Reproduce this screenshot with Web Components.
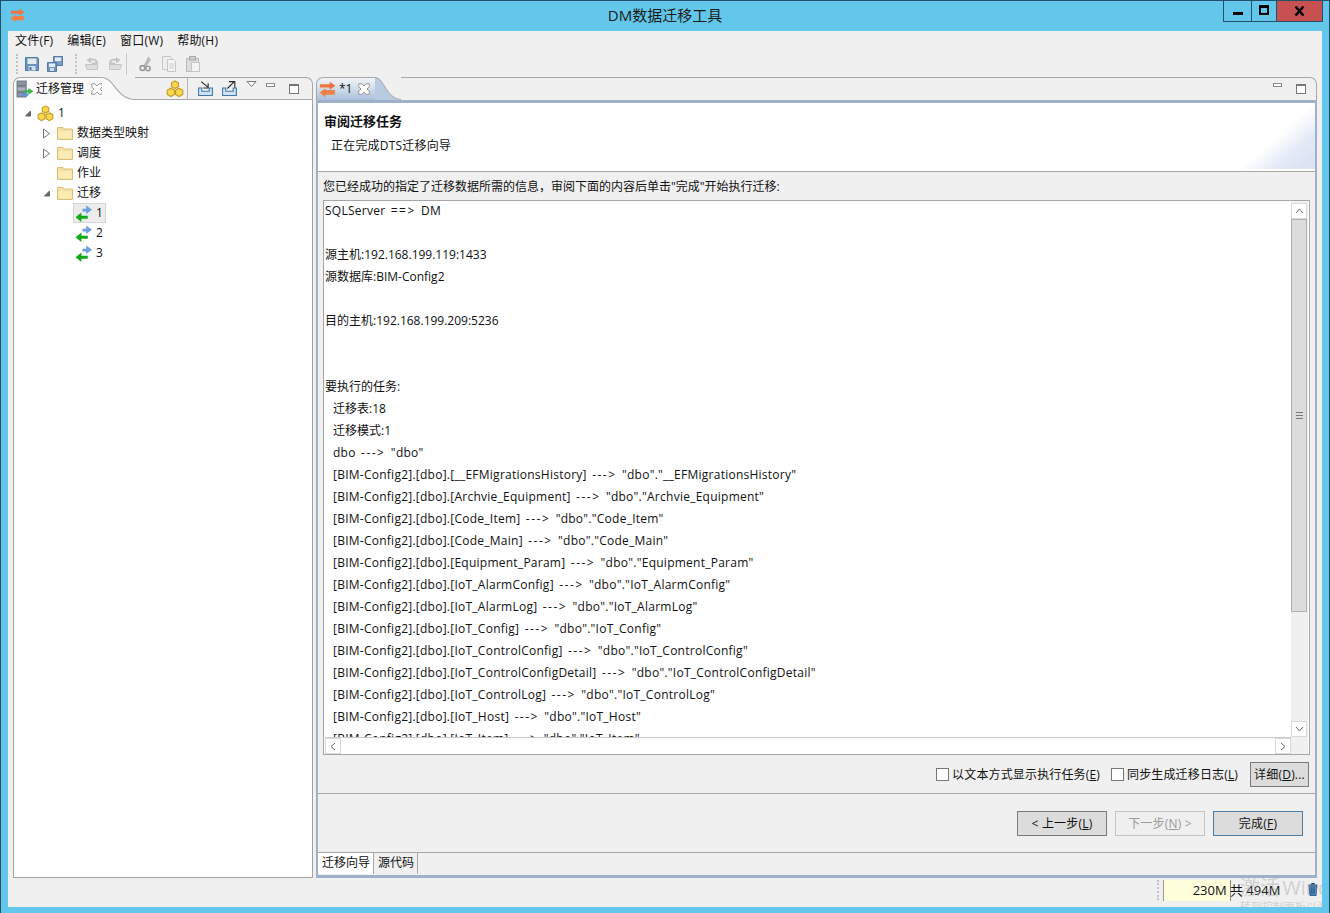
<!DOCTYPE html>
<html lang="zh">
<head>
<meta charset="utf-8">
<title>DM数据迁移工具</title>
<style>
  html, body { margin: 0; padding: 0; height: 100%; overflow: hidden; }
  body { font: 12px/1.2 "Open Sans", "Noto Sans CJK SC", sans-serif; color: #111; }
</style>
</head>
<body>
<dm-window>
  <dm-titlebar slot="title">DM数据迁移工具</dm-titlebar>
  <dm-menubar slot="menu">
    <span>文件(F)</span><span>编辑(E)</span><span>窗口(W)</span><span>帮助(H)</span>
  </dm-menubar>
  <dm-toolbar slot="tools"></dm-toolbar>

  <dm-view slot="left" label="迁移管理" icon="manage" style="width:300px" actions>
    <dm-tree>
      <dm-tree-item level="0" twist="open" icon="nodes">1</dm-tree-item>
      <dm-tree-item level="1" twist="closed" icon="folder">数据类型映射</dm-tree-item>
      <dm-tree-item level="1" twist="closed" icon="folder">调度</dm-tree-item>
      <dm-tree-item level="1" icon="folder">作业</dm-tree-item>
      <dm-tree-item level="1" twist="open" icon="folder">迁移</dm-tree-item>
      <dm-tree-item level="2" icon="swap" selected>1</dm-tree-item>
      <dm-tree-item level="2" icon="swap">2</dm-tree-item>
      <dm-tree-item level="2" icon="swap">3</dm-tree-item>
    </dm-tree>
  </dm-view>

  <dm-view slot="right" label="*1" icon="logo" active style="flex:1">
    <dm-wizard>
      <span slot="title">审阅迁移任务</span>
      <span slot="sub">正在完成DTS迁移向导</span>
      <span slot="intro">您已经成功的指定了迁移数据所需的信息，审阅下面的内容后单击"完成"开始执行迁移:</span>
      <dm-log slot="log"></dm-log>
      <dm-check slot="opts">以文本方式显示执行任务(<u>E</u>)</dm-check>
      <dm-check slot="opts">同步生成迁移日志(<u>L</u>)</dm-check>
      <dm-button slot="opts" style="width:59px;margin-left:1px">详细(<u>D</u>)...</dm-button>
      <dm-button slot="nav">&lt; 上一步(<u>L</u>)</dm-button>
      <dm-button slot="nav" disabled>下一步(<u>N</u>) &gt;</dm-button>
      <dm-button slot="nav" primary>完成(<u>F</u>)</dm-button>
      <span slot="tab" class="on">迁移向导</span>
      <span slot="tab">源代码</span>
    </dm-wizard>
  </dm-view>

  <dm-statusbar slot="status"></dm-statusbar>
</dm-window>

<script>
// small drawn icons, all on a 16x16 box
const ICONS = {
  logo: `<path d="M1 3h9V.8L15.500 4.500 10 8.200V6H1z" fill="#ef7440"/><path d="M15 8.500H6V6.800L.5 11 6 15.200V13h9z" fill="#f0814d"/>`,
  save: `<path d="M1.500 1.500h12l1 1v12h-13z" fill="#6c93bb" stroke="#4f7ba6"/><rect x="3.500" y="2.500" width="9" height="5.500" fill="#e4ebf3"/><rect x="4.500" y="10" width="7" height="4.500" fill="#d5dfe9"/><rect x="5.500" y="11" width="2" height="3" fill="#4f7ba6"/>`,
  saveall: `<path d="M6.500 .5h9v9h-9z" fill="#7ba0c4" stroke="#4f7ba6"/><rect x="8" y="1.500" width="6" height="3.500" fill="#e4ebf3"/><path d="M.5 6.500h9v9h-9z" fill="#6c93bb" stroke="#4f7ba6"/><rect x="2" y="7.500" width="6" height="3.500" fill="#e4ebf3"/><rect x="3" y="12" width="4" height="3" fill="#d5dfe9"/>`,
  undo: `<path d="M1.500 8.500h12v5H3z" fill="#dedede" stroke="#c4c4c4"/><path d="M6 4C10 2.500 13 4 13 7.500H8" fill="none" stroke="#c4c4c4" stroke-width="2"/><path d="M7 1 2.500 4.200 7 7.500z" fill="#c4c4c4"/>`,
  redo: `<path d="M14.500 8.500h-12v5H13z" fill="#dedede" stroke="#c4c4c4"/><path d="M10 4C6 2.500 3 4 3 7.500h5" fill="none" stroke="#c4c4c4" stroke-width="2"/><path d="M9 1l4.500 3.200L9 7.500z" fill="#c4c4c4"/>`,
  cut: `<path d="M11 1 6.500 10M12.500 3 7.500 10" stroke="#b8b8b8" stroke-width="1.800"/><circle cx="4.500" cy="12" r="2.400" fill="none" stroke="#9a9a9a" stroke-width="1.600"/><circle cx="10" cy="12.500" r="2.200" fill="none" stroke="#9a9a9a" stroke-width="1.600"/>`,
  copy: `<path d="M1.500 .5h8l2 2v11h-10z" fill="#eee" stroke="#c6c6c6"/><path d="M6.500 3.500h6l2 2v10h-8z" fill="#f4f4f4" stroke="#c6c6c6"/><path d="M8 8h5M8 10h5M8 12h5" stroke="#cfcfcf"/>`,
  paste: `<rect x="1.500" y="2.500" width="12" height="13" fill="#ddd" stroke="#bbb"/><rect x="4.500" y=".5" width="6" height="3.500" fill="#ccc" stroke="#aaa"/><rect x="6.500" y="6.500" width="8" height="9" fill="#f4f4f4" stroke="#c6c6c6"/>`,
  nodes: `<g stroke="#c99a1e" fill="#f8d84e"><path d="M8 .8l3 1.700v3.400L8 7.600 5 5.900V2.500z"/><path d="M4.300 7.300l3.200 1.800v3.700l-3.200 1.900-3.200-1.900V9.100z"/><path d="M11.700 7.300l3.200 1.800v3.700l-3.200 1.900-3.200-1.900V9.100z"/></g>`,
  folder: `<path d="M.5 2.500h5.500l1 1.500h8.500v10.500H.5z" fill="#f5e0a0" stroke="#d8c07c"/><path d="M1.500 6h13v7.500h-13z" fill="#fbecb4"/>`,
  swap: `<path d="M7 3.500h3.500V.5L16 4.500 10.500 8.500V6H7z" fill="#6f9fdc"/><path d="M12 10H6V7L.5 11.500 6 16V13h6z" fill="#12a816"/>`,
  manage: `<rect x="1" y="1" width="8" height="4" fill="#8d96a0" stroke="#6d7680"/><rect x="1" y="6" width="8" height="4" fill="#aab2bb" stroke="#6d7680"/><rect x="1" y="11" width="8" height="4" fill="#8d96a0" stroke="#6d7680"/><path d="M7 9h4V7l4.500 3L11 13v-2H7z" fill="#3db548"/><path d="M11 12H7.500v-1.500L4 13l3.500 2.500V14H11z" fill="#5b95d6"/>`,
  import: `<path d="M1.500 7.500h3v3h7v-3h3v7h-13z" fill="#cfe1f2" stroke="#3d78ad"/><path d="M4 1.500l6 5M10.500 3v4.500H6" fill="none" stroke="#222"/>`,
  export: `<path d="M1.500 7.500h3v3h7v-3h3v7h-13z" fill="#cfe1f2" stroke="#3d78ad"/><path d="M6 8l6-6M7.500 1.500H13V7" fill="none" stroke="#222"/>`,
  close: `<path d="M2 2h3.500L8 4.500 10.500 2H14v3.500L11.500 8 14 10.500V14h-3.500L8 11.500 5.500 14H2v-3.500L4.500 8 2 5.500z" fill="#fff" stroke="#8b8b8b"/>`,
  trash: `<path d="M3 3.500h10M6 2h4" stroke="#1d4f7a" stroke-width="1.500"/><path d="M3.500 4.500h9l-1 11h-7z" fill="#4f94c8" stroke="#1d4f7a"/><path d="M6 6v8M8 6v8M10 6v8" stroke="#1d4f7a"/>`
};

const FONT = `"Open Sans", "Noto Sans CJK SC", sans-serif`;

class DmIcon extends HTMLElement {
  connectedCallback() {
    const size = this.getAttribute('size') || 16;
    const root = this.shadowRoot || this.attachShadow({ mode: 'open' });
    root.innerHTML = `
      <style>:host { display: inline-block; width: ${size}px; height: ${size}px; flex: none; line-height: 0; }</style>
      <svg width="${size}" height="${size}" viewBox="0 0 16 16">${ICONS[this.getAttribute('name')] || ''}</svg>`;
  }
}

class DmWindow extends HTMLElement {
  constructor() {
    super();
    this.attachShadow({ mode: 'open' }).innerHTML = `
      <style>
        :host { display: flex; flex-direction: column; box-sizing: border-box; width: 1330px; height: 913px;
                background: #62c7ea; border: 1px solid #24506b; border-bottom: 0; overflow: hidden; font: 12px/1.2 ${FONT}; color: #111; }
        .client { flex: 1; display: flex; flex-direction: column; margin: 0 7px 6px 7px; background: #f0f0f0; min-height: 0; }
        .panes { flex: 1; display: flex; gap: 3px; padding: 0 5px 0 5px; min-height: 0; }
      </style>
      <slot name="title"></slot>
      <div class="client">
        <slot name="menu"></slot>
        <slot name="tools"></slot>
        <div class="panes"><slot name="left"></slot><slot name="right"></slot></div>
        <slot name="status"></slot>
      </div>`;
  }
}

class DmTitlebar extends HTMLElement {
  constructor() {
    super();
    this.attachShadow({ mode: 'open' }).innerHTML = `
      <style>
        :host { display: grid; grid-template-columns: 1fr auto 1fr; height: 30px; align-items: start; }
        .logo { padding: 7px 0 0 9px; }
        .title { font-size: 15px; line-height: 29px; color: #1a1a1a; }
        .btns { justify-self: end; display: flex; height: 21px; margin-right: 6px; box-sizing: border-box; border: 1px solid #24506b; border-top: 0; }
        .btns span { display: flex; align-items: center; justify-content: center; box-sizing: border-box; }
        .min { width: 28px; border-right: 1px solid #24506b; }
        .max { width: 25px; border-right: 1px solid #24506b; }
        .cls { width: 45px; background: #c75050; color: #000; }
        .min i { display: block; width: 10px; height: 3px; background: #000; margin-top: 5px; }
        .max i { display: block; width: 6px; height: 5px; border: 2px solid #000; border-top-width: 3px; margin-top: -2px; }
      </style>
      <div class="logo"><dm-icon name="logo" size="15"></dm-icon></div>
      <div class="title"><slot></slot></div>
      <div class="btns">
        <span class="min"><i></i></span><span class="max"><i></i></span>
        <span class="cls"><svg width="11" height="10" viewBox="0 0 11 10"><path d="M1.500 .5 9.500 9.500M9.500 .5 1.500 9.500" stroke="#000" stroke-width="2.400"/></svg></span>
      </div>`;
  }
}

class DmMenubar extends HTMLElement {
  constructor() {
    super();
    this.attachShadow({ mode: 'open' }).innerHTML = `
      <style>
        :host { display: flex; gap: 14px; height: 19px; align-items: center; padding: 2px 0 0 7px; box-sizing: border-box; }
        ::slotted(span) { white-space: nowrap; letter-spacing: .2px; }
      </style><slot></slot>`;
  }
}

class DmToolbar extends HTMLElement {
  constructor() {
    super();
    const ic = (n, m) => `<dm-icon name="${n}" style="margin-left:${m}px"></dm-icon>`;
    this.attachShadow({ mode: 'open' }).innerHTML = `
      <style>
        :host { display: flex; height: 27px; align-items: center; padding-left: 8px; }
        .grip { width: 0; height: 20px; border-left: 2px dotted #c4c4c4; }
        .sep { width: 1px; height: 22px; background: #c8c8c8; margin-left: 3px; }
      </style>
      <span class="grip"></span>${ic('save', 6)}${ic('saveall', 7)}
      <span class="grip" style="margin-left:12px"></span>${ic('undo', 7)}${ic('redo', 7)}
      <span class="sep"></span>${ic('cut', 11)}${ic('copy', 7)}${ic('paste', 8)}`;
  }
}

class DmView extends HTMLElement {
  constructor() {
    super();
    this.attachShadow({ mode: 'open' });
  }
  connectedCallback() {
    const active = this.hasAttribute('active');
    const frame = active ? '#9fb1c9' : '#a2a2a2';
    const tabBg = active ? 'linear-gradient(#f2f4f7 0%, #dfe6ef 30%, #a9c0db 100%)' : '#fafafa';
    const actions = this.hasAttribute('actions') ? `
      <dm-icon name="nodes" size="18" style="margin-right:3px"></dm-icon>
      <span class="vsep"></span>
      <dm-icon name="import" size="17" style="margin-left:9px"></dm-icon>
      <dm-icon name="export" size="17" style="margin-left:7px"></dm-icon>
      <svg class="menu" width="11" height="7" viewBox="0 0 11 7"><path d="M1 .5h9L5.500 5.500z" fill="#fff" stroke="#777"/></svg>` : '';
    this.shadowRoot.innerHTML = `
      <style>
        :host { display: flex; flex-direction: column; box-sizing: border-box; min-width: 0; }
        .head { display: flex; height: 23px; flex: none; box-sizing: border-box; position: relative; }
        .tab { display: flex; align-items: center; gap: ${active ? 3 : 2}px; padding: 0 0 0 2px; background: ${tabBg};
               border: 1px solid #a8a8a8; border-width: 1px 0 0 1px; border-radius: 7px 0 0 0; font-size: 12px; }
        .label { white-space: nowrap; }
        .curve { flex: none; display: block; }
        .fill { flex: 1; display: flex; align-items: center; justify-content: flex-end; border: 1px solid #a8a8a8;
                border-width: 1px 1px ${active ? 0 : 1}px 0; border-radius: 0 7px 0 0; padding-right: ${active ? 10 : 13}px; min-width: 0; }
        .vsep { width: 1px; height: 22px; background: #b4b4b4; }
        .menu { margin: 0 0 9px 8px; }
        .min { width: 7px; height: 2px; border: 1px solid #8a8a8a; background: #fff; margin: 0 14px 8px 9px; }
        .max { width: 8px; height: 7px; border: 1px solid #777; border-top-width: 2px; background: #fff; }
        .x { margin-left: ${active ? 2 : 4}px; }
        .body { flex: 1; min-height: 0; background: #fff; box-sizing: border-box; display: flex; flex-direction: column;
                border: ${active ? 3 : 1}px solid ${frame}; border-width: ${active ? '3px 2px 3px 2px' : '0 1px 1px 1px'}; }
      </style>
      <div class="head">
        <div class="tab" style="width:${active ? 56 : 86}px">
          <dm-icon name="${this.getAttribute('icon')}" size="${active ? 17 : 18}"></dm-icon>
          <span class="label">${this.getAttribute('label')}</span>
          <dm-icon class="x" name="close" size="14"></dm-icon>
        </div>
        <svg class="curve" width="${active ? 26 : 33}" height="23" viewBox="0 0 28 23" preserveAspectRatio="none">
          <path d="M0 0C10 0 12 22 28 22.500V23H0z" fill="${active ? '#b8cbe0' : '#fafafa'}"/>
          <path d="M0 .5C10 .5 12 22 28 22.500" fill="none" stroke="#a8a8a8"/>
        </svg>
        <div class="fill">${actions}<span class="min"></span><span class="max"></span></div>
      </div>
      <div class="body"><slot></slot></div>`;
  }
}

class DmTree extends HTMLElement {
  constructor() {
    super();
    this.attachShadow({ mode: 'open' }).innerHTML = `
      <style>:host { display: block; padding: 3px 0 0 0; }</style><slot></slot>`;
  }
}

class DmTreeItem extends HTMLElement {
  connectedCallback() {
    const level = +this.getAttribute('level');
    const twist = this.getAttribute('twist');
    const selected = this.hasAttribute('selected');
    const glyph = twist === 'open'
      ? `<svg width="9" height="9" viewBox="0 0 9 9"><path d="M7.500 2v5h-5z" fill="#666" stroke="#666"/></svg>`
      : twist === 'closed'
        ? `<svg width="9" height="11" viewBox="0 0 9 11"><path d="M1.500 1v9L7.500 5.500z" fill="#fff" stroke="#777"/></svg>` : '';
    const pad = selected ? '0 2px 0 1px' : `0 2px 0 ${[0, 1, 2][level]}px`;
    const root = this.shadowRoot || this.attachShadow({ mode: 'open' });
    root.innerHTML = `
      <style>
        :host { display: flex; align-items: center; height: 20px; padding-left: ${[9, 28, 59][level]}px; }
        .tw { width: 9px; height: 20px; display: flex; align-items: center; margin-right: 5px; }
        .row { display: flex; align-items: center; gap: 4px; height: 20px; box-sizing: border-box; padding: ${pad};
               ${selected ? 'background: #ececec; border: 1px solid #d6d6d6;' : ''} }
      </style>
      ${level === 2 ? '' : `<span class="tw">${glyph}</span>`}
      <span class="row"><dm-icon name="${this.getAttribute('icon')}" size="${level === 1 ? 16 : 17}"></dm-icon><slot></slot></span>`;
  }
}

class DmWizard extends HTMLElement {
  constructor() {
    super();
    this.attachShadow({ mode: 'open' }).innerHTML = `
      <style>
        :host { display: flex; flex-direction: column; flex: 1; min-height: 0; background: #f0f0f0; }
        .banner { height: 66px; flex: none; box-sizing: border-box; padding: 10px 0 0 6px; background:
                  linear-gradient(to top left, #d8e1f3 0, #e2e9f6 26%, rgba(255,255,255,0) 50%) right bottom / 76px 66px no-repeat, #fff; }
        .title { font-weight: 700; font-size: 13px; line-height: 16px; display: block; }
        .sub { display: block; margin: 9px 0 0 7px; line-height: 16px; letter-spacing: .2px; }
        .rule { height: 1px; background: #a6a6a6; flex: none; }
        .intro { padding: 6px 0 0 5px; height: 22px; line-height: 18px; flex: none; }
        .log { margin: 0 5px 0 5px; flex: none; }
        .opts { display: flex; justify-content: flex-end; align-items: center; gap: 11px; padding: 7px 6px 6px 0; flex: none; }
        .nav { display: flex; justify-content: flex-end; gap: 8px; padding: 17px 12px 16px 0; flex: none; }
        .nav ::slotted(dm-button) { width: 90px; height: 25px; }
        .tabs { flex: none; display: flex; height: 21px; }
        .tabs ::slotted(span) { box-sizing: border-box; padding: 3px 3px 0 4px; height: 21px; border-right: 1px solid #a8a8a8; }
        .tabs ::slotted(.on) { background: #fff; padding-left: 4px; }
      </style>
      <div class="banner">
        <slot class="title" name="title"></slot>
        <slot class="sub" name="sub"></slot>
      </div>
      <div style="height:2px;flex:none;background:#fff"></div>
      <div class="rule"></div>
      <div class="intro"><slot name="intro"></slot></div>
      <div class="log"><slot name="log"></slot></div>
      <div class="opts"><slot name="opts"></slot></div>
      <div class="rule"></div>
      <div class="nav"><slot name="nav"></slot></div>
      <div class="rule"></div>
      <div class="tabs"><slot name="tab"></slot></div>`;
  }
}

const LOG_LINES = [
  'SQLServer ==> DM', '', '源主机:192.168.199.119:1433', '源数据库:BIM-Config2', '',
  '目的主机:192.168.199.209:5236', '', '', '要执行的任务:',
  '>迁移表:18', '>迁移模式:1', '>dbo ---> "dbo"',
  ...['__EFMigrationsHistory', 'Archvie_Equipment', 'Code_Item', 'Code_Main', 'Equipment_Param',
      'IoT_AlarmConfig', 'IoT_AlarmLog', 'IoT_Config', 'IoT_ControlConfig', 'IoT_ControlConfigDetail',
      'IoT_ControlLog', 'IoT_Host', 'IoT_Item'].map(t => `>[BIM-Config2].[dbo].[${t}] ---> "dbo"."${t}"`)
];

class DmLog extends HTMLElement {
  constructor() {
    super();
    const lines = LOG_LINES.map(l => {
      const indent = l.startsWith('>');
      const text = (indent ? l.slice(1) : l).replace(/&/g, '&amp;').replace(/</g, '&lt;').replace(/>/g, '&gt;');
      // the arrows run wider than this font sets them
      const marked = text.replace(/---&gt;|==&gt;/, m => `<span class="arrow">${m}</span>`);
      const wide = marked !== text ? ' wide' : '';
      return `<div class="ln${indent ? ' in' : ''}${wide}">${marked || '&nbsp;'}</div>`;
    }).join('');
    this.attachShadow({ mode: 'open' }).innerHTML = `
      <style>
        :host { display: grid; grid-template-columns: 1fr 17px; grid-template-rows: 536px 17px; height: 555px; box-sizing: border-box;
                border: 1px solid #a6a6a6; background: #fff; padding: 0 1px 0 1px; }
        .text { overflow: hidden; min-width: 0; }
        .ln { height: 22px; line-height: 22px; white-space: pre; position: relative; top: -1px; }
        .in { padding-left: 8px; }
        .wide { letter-spacing: .25px; word-spacing: 2px; }
        .arrow { letter-spacing: 1.500px; }
        .v { background: #f0f0f0; display: flex; flex-direction: column; padding-top: 2px; }
        .btn { width: 16px; height: 16px; box-sizing: border-box; background: #fff; border: 1px solid #d8d8d8; display: flex; align-items: center; justify-content: center; flex: none; }
        .thumb { height: 393px; background: #dcdcdc; border: 1px solid #b0b0b0; box-sizing: border-box; width: 16px; display: flex; align-items: center; justify-content: center; }
        .thumb i { display: block; width: 7px; height: 7px; background: repeating-linear-gradient(#777 0 1px, #dcdcdc 1px 3px); }
        .track { flex: 1; }
        .h { background: #fff; border-top: 1px solid #c8c8c8; display: flex; justify-content: space-between; min-width: 0; }
        .corner { background: #f0f0f0; }
      </style>
      <div class="text">${lines}</div>
      <div class="v">
        <span class="btn"><svg width="9" height="6" viewBox="0 0 9 6"><path d="M1 5l3.500-4L8 5" fill="none" stroke="#666"/></svg></span>
        <div class="thumb"><i></i></div><div class="track"></div>
        <span class="btn"><svg width="9" height="6" viewBox="0 0 9 6"><path d="M1 1l3.500 4L8 1" fill="none" stroke="#666"/></svg></span>
      </div>
      <div class="h">
        <span class="btn"><svg width="6" height="9" viewBox="0 0 6 9"><path d="M5 1L1 4.500 5 8" fill="none" stroke="#666"/></svg></span>
        <span class="btn"><svg width="6" height="9" viewBox="0 0 6 9"><path d="M1 1l4 3.500L1 8" fill="none" stroke="#666"/></svg></span>
      </div>
      <div class="corner"></div>`;
  }
}

class DmCheck extends HTMLElement {
  constructor() {
    super();
    this.attachShadow({ mode: 'open' }).innerHTML = `
      <style>
        :host { display: inline-flex; align-items: center; gap: 3px; white-space: nowrap; letter-spacing: .15px; padding-top: 1px; }
        i { width: 11px; height: 11px; border: 1px solid #777; background: #fff; display: block; }
      </style><i></i><span><slot></slot></span>`;
  }
}

class DmButton extends HTMLElement {
  connectedCallback() {
    const disabled = this.hasAttribute('disabled');
    const primary = this.hasAttribute('primary');
    const root = this.shadowRoot || this.attachShadow({ mode: 'open' });
    root.innerHTML = `
      <style>
        :host { display: inline-flex; align-items: center; justify-content: center; box-sizing: border-box; height: 25px; white-space: nowrap; letter-spacing: .2px; padding-top: 2px;
                background: ${disabled ? '#efefef' : '#dcdcdc'}; color: ${disabled ? '#9a9a9a' : '#111'};
                border: 1px solid ${disabled ? '#c4c4c4' : primary ? '#4b7ea6' : '#7a7a7a'}; }
      </style><slot></slot>`;
  }
}

class DmStatusbar extends HTMLElement {
  constructor() {
    super();
    this.attachShadow({ mode: 'open' }).innerHTML = `
      <style>
        :host { display: flex; height: 29px; flex: none; justify-content: flex-end; padding-right: 2px; position: relative; overflow: hidden; }
        .grip { width: 0; height: 20px; margin: 2px 4px 0 0; border-left: 2px dotted #c4c4c4; }
        .mem { width: 143px; height: 21px; box-sizing: border-box; margin-top: 2px; border-left: 1px solid #999; display: flex; justify-content: center; font-size: 13px; line-height: 21px;
               background: linear-gradient(90deg, #ffffdc 0 66px, #8a8a8a 66px 67px, #f0f0f0 67px 100%); }
        .mem b { font-weight: 400; padding-left: 3px; }
        .tr { margin: 4px 0 0 0; }
        .wm { position: absolute; left: 1232px; right: 0; top: -2px; overflow: hidden; color: rgba(160,160,160,.42); white-space: nowrap; font-size: 20px; line-height: 24px; word-spacing: -3px; }
        .wm small { display: block; font-size: 11px; line-height: 12px; margin-top: 1px; word-spacing: 0; }
      </style>
      <span class="grip"></span>
      <div class="mem"><b>230M 共 494M</b></div>
      <dm-icon class="tr" name="trash" size="14"></dm-icon>
      <div class="wm">激活 Windows<small>转到控制面板以激活</small></div>`;
  }
}

customElements.define('dm-icon', DmIcon);
customElements.define('dm-window', DmWindow);
customElements.define('dm-titlebar', DmTitlebar);
customElements.define('dm-menubar', DmMenubar);
customElements.define('dm-toolbar', DmToolbar);
customElements.define('dm-view', DmView);
customElements.define('dm-tree', DmTree);
customElements.define('dm-tree-item', DmTreeItem);
customElements.define('dm-wizard', DmWizard);
customElements.define('dm-log', DmLog);
customElements.define('dm-check', DmCheck);
customElements.define('dm-button', DmButton);
customElements.define('dm-statusbar', DmStatusbar);
</script>
</body>
</html>
